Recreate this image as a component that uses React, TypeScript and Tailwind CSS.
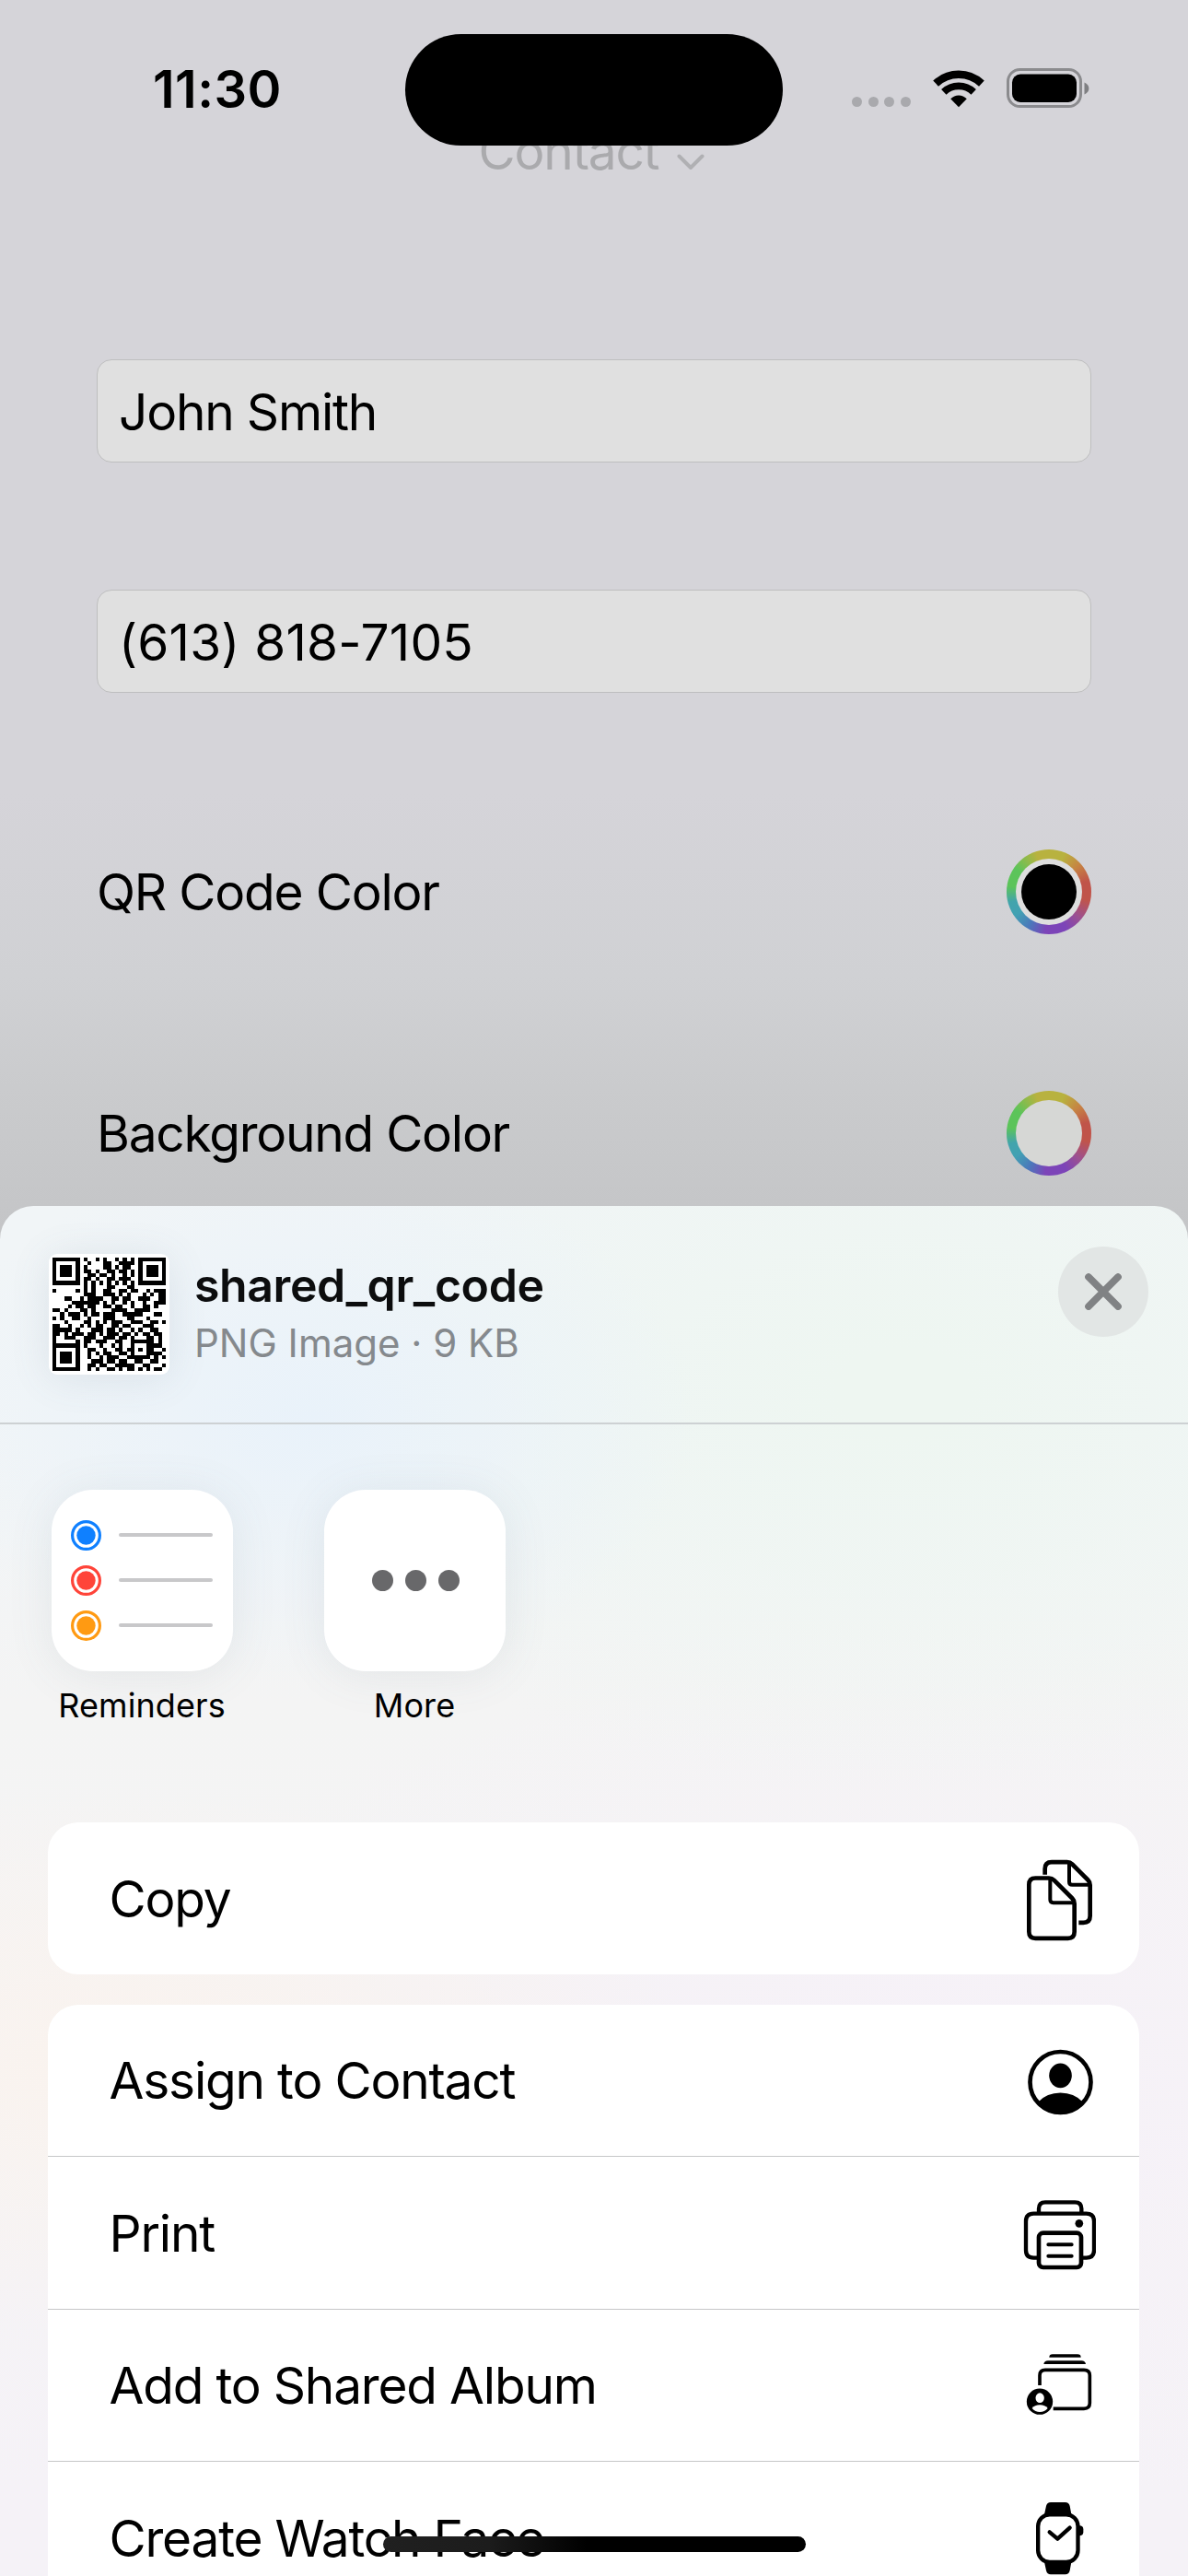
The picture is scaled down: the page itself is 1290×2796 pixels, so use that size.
import type { ReactNode } from "react";

const QR_ROWS = [
  "11111110100101001010101111111",
  "10000010010001100111101000001",
  "10111010100001101011001011101",
  "10111010110100110110101011101",
  "10111010011011010010101011101",
  "10000010110100110111001000001",
  "11111110101010101010101111111",
  "00000000101000110001100000000",
  "10000010101001100110110010111",
  "00000000111001110101000101011",
  "00011001011110011011001110011",
  "00000111111101010010100100111",
  "00001011011001101100100110100",
  "11010001101000011110011110000",
  "00101110101101110011111000110",
  "10100110010001110001100010000",
  "00010000110101011100111001101",
  "11001001010110011011000111000",
  "11111010001110110100101001100",
  "11010111011010111011010110110",
  "10011100111001110110100011010",
  "10000010110111001100111111010",
  "00000000100010010100100011110",
  "11111110011001001101101011001",
  "10000010010101100110100011110",
  "10111010010010111001111110101",
  "10111010001110110110011001100",
  "10111010011011001111100110001",
  "10000010010100110101101010110",
];

const QR_CELLS = QR_ROWS.flatMap((row, y) =>
  [...row].map((cell, x) => ({ cell, x, y })).filter(({ cell, x, y }) => {
    const finder = (x < 7 && y > 21) || (x < 7 && y < 7) || (x > 21 && y < 7);
    return cell === "1" && !finder;
  }),
);

function Finder({ x, y }: { x: number; y: number }) {
  return (
    <g transform={`translate(${x} ${y})`}>
      <path d="M0 0h7v7h-7z M1 1v5h5v-5z M2 2h3v3h-3z" fillRule="evenodd" />
    </g>
  );
}

function QrThumb() {
  return (
    <div className="flex h-[131px] w-[131px] shrink-0 items-center justify-center rounded-[9px] bg-white shadow-[0_4px_44px_rgba(90,110,120,0.12)]">
      <svg viewBox="0 0 29 29" className="h-[123px] w-[123px]" shapeRendering="crispEdges">
        {QR_CELLS.map(({ x, y }) => (
          <rect key={`${x}-${y}`} x={x} y={y} width="1" height="1" />
        ))}
        <Finder x={0} y={0} />
        <Finder x={22} y={0} />
        <Finder x={0} y={22} />
      </svg>
    </div>
  );
}

function StatusBar() {
  return (
    <div className="absolute inset-x-0 top-0 flex h-[192px] items-start">
      <div className="mt-[65px] ml-[166px] w-[274px] text-[56px] leading-[64px] font-semibold tracking-[0.4px]">
        11:30
      </div>
      <div className="mt-[37px] h-[121px] w-[410px] rounded-full bg-black" />
      <div className="mt-[105px] ml-[75px] flex gap-[6.5px]">
        {[0, 1, 2, 3].map((i) => (
          <span key={i} className="h-[11px] w-[11px] rounded-full bg-[#a9a9ad]" />
        ))}
      </div>
      <svg viewBox="0 0 56 42" className="mt-[75px] ml-[24px] h-[42px] w-[56px]" fill="none" stroke="#000">
        <path d="M3.1 15.6A36.3 36.3 0 0 1 52.9 15.6" strokeWidth="8.4" />
        <path d="M11.8 24.9A23.4 23.4 0 0 1 44.2 24.9" strokeWidth="7.8" />
        <path d="M28 41.3L19.2 32.3Q23 28.4 28 28.4T36.8 32.3Z" fill="#000" stroke="none" />
      </svg>
      <svg viewBox="0 0 92 44" className="mt-[74px] ml-[24px] h-[44px] w-[92px]">
        <rect x="1.5" y="1.5" width="79" height="40" rx="13" fill="none" stroke="#8b8b8e" strokeWidth="3" />
        <rect x="6" y="6.5" width="70" height="30.5" rx="9" />
        <path d="M84.5 15.5c6.5 2.5 6.5 10.5 0 13z" fill="#7f7f82" />
      </svg>
    </div>
  );
}

function Field({ children }: { children: ReactNode }) {
  return (
    <div className="flex h-[112px] items-center rounded-[16px] border-[1.5px] border-[#bebebf] bg-[#e0e0e0] pt-[2px] pl-[23px] text-[55px]">
      {children}
    </div>
  );
}

function ColorWell({ filled }: { filled?: boolean }) {
  return (
    <div className="flex h-[92px] w-[92px] items-center justify-center rounded-full bg-[conic-gradient(#b8b23f_0deg,#b8b23f_22deg,#c68543_48deg,#c0544a_75deg,#c0544a_102deg,#9c5090_130deg,#7c44b8_155deg,#7c44b8_185deg,#4b78bb_210deg,#42a1b3_235deg,#42a4ac_255deg,#5cc45a_278deg,#5cc45a_305deg,#b8b23f_342deg)]">
      <div
        className={
          filled
            ? "flex h-[72px] w-[72px] items-center justify-center rounded-full bg-[#dedede]"
            : "h-[72px] w-[72px] rounded-full bg-[#d6d7d5]"
        }
      >
        {filled && <div className="h-[60px] w-[60px] rounded-full bg-black" />}
      </div>
    </div>
  );
}

function ReminderLine({ color }: { color: string }) {
  return (
    <div className="flex h-[33px] items-center">
      <svg viewBox="0 0 33 33" className="h-[33px] w-[33px]">
        <circle cx="16.5" cy="16.5" r="14.9" fill="none" stroke={color} strokeWidth="3.2" />
        <circle cx="16.5" cy="16.5" r="10.2" fill={color} />
      </svg>
      <span className="ml-[19px] h-[4px] w-[102px] rounded-full bg-[#c8c8ca]" />
    </div>
  );
}

function AppTile({ label, children }: { label: ReactNode; children: ReactNode }) {
  return (
    <div className="flex w-[197px] flex-col items-center">
      <div className="h-[197px] w-[197px] rounded-[45px] bg-white shadow-[0_4px_50px_rgba(90,110,120,0.1)]">
        {children}
      </div>
      <div className="mt-[15px] pr-[1px] text-[36px] leading-[44px] tracking-[0.1px] whitespace-nowrap">{label}</div>
    </div>
  );
}

function IconBox({ viewBox, children }: { viewBox: string; children: ReactNode }) {
  return (
    <svg
      viewBox={viewBox}
      className="h-[100px] w-[80px] shrink-0"
      fill="none"
      stroke="#000"
      strokeWidth="14"
      strokeLinejoin="round"
      strokeLinecap="round"
    >
      {children}
    </svg>
  );
}

function CopyIcon() {
  return (
    <IconBox viewBox="150 150.5 240 300">
      <path d="M224 222V203q0-22 22-22h50q10 0 17 7l51 51q7 7 7 17v100q0 22-22 22h-15" strokeLinecap="butt" />
      <path d="M303 186v59q0 10 10 10h57" strokeWidth="12" />
      <path d="M172 254q0-21 21-21h44q10 0 17 7l59 59q7 7 7 17v92q0 21-21 21H193q-21 0-21-21z" />
      <path d="M241 238v65q0 10 10 10h65" strokeWidth="12" />
    </IconBox>
  );
}

function ContactIcon() {
  return (
    <IconBox viewBox="150 745.5 240 300">
      <circle cx="274.500" cy="901.500" r="99" />
      <ellipse cx="274.500" cy="880" rx="37" ry="40" fill="#000" stroke="none" />
      <path d="M202 966Q230 936 274.500 936T347 966Q318 1006 274.500 1006T202 966Z" fill="#000" stroke="none" />
    </IconBox>
  );
}

function PrintIcon() {
  return (
    <IconBox viewBox="150 69 240 300">
      <path d="M204 154V142q0-21 21-21h97q21 0 21 21v12" strokeLinecap="butt" strokeWidth="13" />
      <path d="M204 302H187q-25 0-25-25V183q0-25 25-25H359q25 0 25 25v94q0 25-25 25H343" strokeLinecap="butt" strokeWidth="13" />
      <rect x="204" y="221" width="138" height="112" rx="14" />
      <path d="M235 259h76M235 296h76" strokeWidth="12" />
      <circle cx="335.500" cy="190" r="13" fill="#000" stroke="none" />
    </IconBox>
  );
}

function AlbumIcon() {
  return (
    <IconBox viewBox="150 564 240 300">
      <path d="M238 623q0-10 11-10h81q11 0 11 10z" fill="#000" stroke="none" />
      <path d="M220 645q2-11 14-11h109q12 0 14 11z" fill="#000" stroke="none" />
      <path d="M207 714V682q0-18 18-18H351q19 0 19 18v90q0 18-19 18H251" strokeLinecap="butt" strokeWidth="11" />
      <circle cx="207" cy="767" r="42.500" fill="#000" stroke="none" />
      <ellipse cx="207.500" cy="755" rx="14" ry="16" fill="#fff" stroke="none" />
      <path d="M182 789Q190 778 207.500 778T233 789Q223 801 207.500 801T182 789Z" fill="#fff" stroke="none" />
    </IconBox>
  );
}

function WatchIcon() {
  return (
    <IconBox viewBox="150 1060 240 300">
      <path d="M221 1140l7-32q3-12 15-12h47q12 0 15 12l6 32zM221 1286l7 32q3 13 15 13h47q12 0 15-13l6-32z" fill="#000" stroke="none" />
      <rect x="201.500" y="1136" width="130" height="155" rx="38" strokeWidth="13" fill="#fff" />
      <path d="M336 1172q13 0 13 12v9q0 12-13 12z" fill="#000" stroke="none" />
      <path d="M239 1193l26 22 40-36" strokeWidth="13" />
    </IconBox>
  );
}

function ActionRow({ label, icon, last }: { label: ReactNode; icon: ReactNode; last?: boolean }) {
  return (
    <div
      className={
        last
          ? "flex h-[165px] items-center justify-between pr-[47px] pl-[66.5px]"
          : "flex h-[165.3px] items-center justify-between border-b border-[#c6c7c8] pr-[47px] pl-[66.5px]"
      }
    >
      <span className="pt-[1px] text-[55px] tracking-[-1.2px] whitespace-nowrap">{label}</span>
      {icon}
    </div>
  );
}

function ShareSheet() {
  return (
    <section className="h-[1487px] overflow-hidden rounded-t-[36px] bg-[radial-gradient(ellipse_420px_290px_at_340px_230px,#e9f2fa_0%,#e9f2fa00_100%),radial-gradient(ellipse_680px_440px_at_980px_200px,#eef6f1_10%,#eef6f100_100%),radial-gradient(ellipse_620px_300px_at_130px_930px,#faf3ee_0%,#faf3ee00_100%),radial-gradient(ellipse_900px_480px_at_1000px_960px,#f6f1f8_0%,#f6f1f800_100%),linear-gradient(#f1f5f7_0px,#f1f5f7_250px,#f4f4f4_540px,#f5f4f5_950px,#f5f2f7_1400px)]">
      <header className="flex h-[237px] items-start border-b-[2px] border-[#cdd1d3] pt-[52px] pl-[53px]">
        <QrThumb />
        <div className="ml-[27px] flex-1 pt-[3px]">
          <div className="text-[50px] leading-[62px] font-semibold text-[#0c0d0e]">
            <span className="tracking-[-0.4px]">shared_qr_code</span>
          </div>
          <div className="text-[42px] leading-[63px] text-[#85898d]">
            <span>PNG Image · 9 KB</span>
          </div>
        </div>
        <button className="-mt-[8px] mr-[43px] flex h-[98px] w-[98px] items-center justify-center rounded-full bg-[#e2e6e5]">
          <svg viewBox="0 0 40 40" className="h-[40px] w-[40px]" stroke="#808284" strokeWidth="7.6" strokeLinecap="round">
            <path d="M4 4L36 36M36 4L4 36" />
          </svg>
        </button>
      </header>

      <div className="flex h-[432px] gap-[99px] pt-[71px] pl-[56px]">
        <AppTile label={<span>Reminders</span>}>
          <div className="flex flex-col gap-[16px] pt-[32.5px] pl-[20.5px]">
            <ReminderLine color="#0f80ff" />
            <ReminderLine color="#ff4439" />
            <ReminderLine color="#ff9a12" />
          </div>
        </AppTile>
        <AppTile label={<span>More</span>}>
          <div className="flex h-full items-center justify-center gap-[13px] pb-[1px] pl-[2px]">
            {[0, 1, 2].map((i) => (
              <span key={i} className="h-[23px] w-[23px] rounded-full bg-[#68686a]" />
            ))}
          </div>
        </AppTile>
      </div>

      <div className="mr-[53px] ml-[52px] rounded-[33px] bg-white">
        <ActionRow last label={<span>Copy</span>} icon={<CopyIcon />} />
      </div>
      <div className="mt-[33px] mr-[53px] ml-[52px] rounded-[33px] bg-white">
        <ActionRow label={<span>Assign to Contact</span>} icon={<ContactIcon />} />
        <ActionRow label={<span>Print</span>} icon={<PrintIcon />} />
        <ActionRow label={<span>Add to Shared Album</span>} icon={<AlbumIcon />} />
        <ActionRow last label={<span>Create Watch Face</span>} icon={<WatchIcon />} />
      </div>
    </section>
  );
}

export default function App() {
  return (
    <div className="relative h-[2796px] w-[1290px] overflow-hidden bg-[linear-gradient(#d5d4d9_0px,#d5d4d9_860px,#d0d1d4_1060px,#cacbcd_1180px,#c5c6c8_1309px,#c3c4c6_1360px)] font-['Inter','Liberation_Sans',sans-serif] text-black">
      <main className="flex h-[1309px] flex-col px-[105px]">
        <div className="flex h-[390px] items-start justify-center gap-[20px] pt-[133px] pr-[5px] text-[55px] leading-[62px] tracking-[-1.2px] text-[#aaaaad]">
          <span>Contact</span>
          <svg viewBox="0 0 30 18" className="mt-[34px] h-[18px] w-[30px]" fill="none" stroke="#b0b0b3" strokeWidth="4" strokeLinecap="round" strokeLinejoin="round">
            <path d="M2.500 2.500L15 15L27.500 2.500" />
          </svg>
        </div>
        <Field>
          <span className="tracking-[-1.2px]">John Smith</span>
        </Field>
        <div className="h-[138px]" />
        <Field>
          <span className="tracking-[0.2px]">(613) 818-7105</span>
        </Field>
        <div className="mt-[170px] flex h-[92px] items-center justify-between text-[55px] tracking-[-1.2px]">
          <span>QR Code Color</span>
          <ColorWell filled />
        </div>
        <div className="mt-[170px] flex h-[92px] items-center justify-between text-[55px] tracking-[-1.25px]">
          <span>Background Color</span>
          <ColorWell />
        </div>
      </main>
      <ShareSheet />
      <StatusBar />
      <div className="absolute top-[2753px] left-[416px] h-[17px] w-[459px] rounded-full bg-[linear-gradient(90deg,#202020_0%,#1c1c1c_25%,#0c0c0c_38%,#000_48%)]" />
    </div>
  );
}
